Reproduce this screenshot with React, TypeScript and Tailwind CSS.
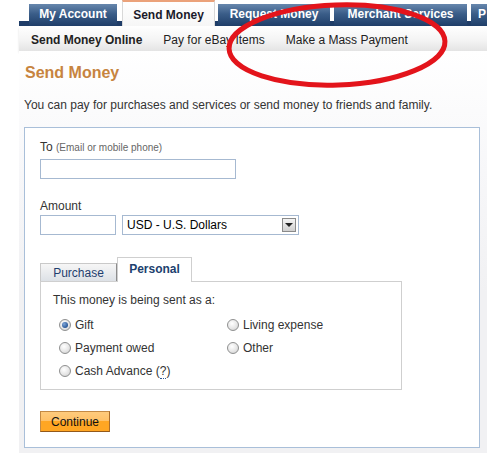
import React from "react"

// Barra superior con pestañas tipo PayPal clásico
const DARK_TAB =
  "h-[22px] flex justify-center pt-[3px] text-white font-bold text-[12px] leading-[14px] whitespace-nowrap bg-[linear-gradient(to_bottom,#6787ad,#3a5d88_45%,#1f3e69)]"

function Radio({ checked = false }: { checked?: boolean }) {
  return (
    <span className="w-[12px] h-[12px] rounded-full border border-[#8f9090] bg-[radial-gradient(circle_at_40%_35%,#ffffff,#e6e6e6_55%,#c9c9c9)] flex items-center justify-center shrink-0">
      {checked && (
        <span className="w-[6px] h-[6px] rounded-full bg-[radial-gradient(circle_at_35%_35%,#7fa6d8,#2a5898_70%)]" />
      )}
    </span>
  )
}

function RadioOption({ label, checked }: { label: React.ReactNode; checked?: boolean }) {
  return (
    <label className="h-[23px] flex items-center gap-[4px] text-[12px] text-[#333]">
      <Radio checked={checked} />
      <span>{label}</span>
    </label>
  )
}

export default function App() {
  return (
    <div className="relative w-[487px] h-[453px] overflow-hidden bg-white font-['Liberation_Sans',Arial,sans-serif]">
      <div className="ml-[19px] h-full flex flex-col">
        {/* Pestañas */}
        <div className="h-[26px] flex items-end bg-[linear-gradient(to_bottom,transparent_21px,#1f3d68_21px)]">
          <div className={`${DARK_TAB} ml-[10px] w-[88px]`}>My Account</div>
          <div className="ml-[5px] w-[93px] h-[26px] flex justify-center pt-[6px] border-t-2 border-[#eba27a] border-x border-x-[#d8d8d8] bg-[linear-gradient(to_bottom,#ffffff,#f6f6f6)] text-[#1a1a2a] font-bold text-[12px] leading-[14px] whitespace-nowrap">
            Send Money
          </div>
          <div className={`${DARK_TAB} ml-[3px] w-[112px]`}>Request Money</div>
          <div className={`${DARK_TAB} ml-[4px] w-[133px]`}>Merchant Services</div>
          <div className={`${DARK_TAB} ml-[4px] flex-1 !justify-start pl-[7px] overflow-hidden`}>P</div>
        </div>

        {/* Sub navegación */}
        <div className="h-[25px] flex items-start pt-[7px] pl-[12px] gap-[21px] text-[12px] leading-[14px] text-[#222] bg-[linear-gradient(to_bottom,#ffffff,#f3f3f3_60%,#e4e4e4)] shadow-[0_2px_2px_rgba(0,0,0,0.12)] whitespace-nowrap">
          <span className="font-bold">Send Money Online</span>
          <span>Pay for eBay Items</span>
          <span>Make a Mass Payment</span>
        </div>

        {/* Contenido */}
        <div className="flex-1 pl-[5px] pr-[7px] pt-[13px] bg-[linear-gradient(to_bottom,#ffffff,#f7f7f9_30%,#f1f1f3_60%)]">
          <h1 className="ml-px text-[16px] leading-[18px] font-bold text-[#c7843f]">Send Money</h1>
          <p className="mt-[16px] text-[12px] leading-[14px] text-[#333] whitespace-nowrap">
            You can pay for purchases and services or send money to friends and family.
          </p>

          <div className="mt-[15px] border border-[#a9bfd9] bg-white pl-[15px] pt-[12px] pb-[14px]">
            <div className="text-[12px] leading-[14px] text-[#333]">
              To <span className="text-[10px] text-[#666]">(Email or mobile phone)</span>
            </div>
            <div className="mt-[4px] w-[196px] h-[20px] border border-[#a6b9d1] bg-white" />

            <div className="mt-[20px] text-[12px] leading-[14px] text-[#333]">Amount</div>
            <div className="mt-[2px] flex gap-[6px]">
              <div className="w-[76px] h-[20px] border border-[#a6b9d1] bg-white" />
              <div className="w-[177px] h-[20px] border border-[#a6b9d1] bg-white flex items-center pl-[4px] pr-[2px]">
                <span className="flex-1 text-[12px] text-black">USD - U.S. Dollars</span>
                <span className="w-[14px] h-[14px] border border-[#8a8a8a] bg-[linear-gradient(to_bottom,#f4f4f4,#cfcfcf)] flex items-center justify-center">
                  <span className="w-0 h-0 border-x-[4px] border-x-transparent border-t-[4px] border-t-[#222]" />
                </span>
              </div>
            </div>

            {/* Pestañas Purchase / Personal */}
            <div className="mt-[22px] flex items-end">
              <div className="w-[77px] h-[18px] border border-[#c9c9c9] border-r-[#8c8c8c] border-b-0 bg-[linear-gradient(to_bottom,#f6f6f6,#dde1e6)] flex items-center justify-center text-[12px] text-[#1f3e6e]">
                Purchase
              </div>
              <div className="relative -mb-px w-[75px] h-[25px] border border-[#cfcfcf] border-b-0 bg-white flex justify-center pt-[4px] text-[12px] leading-[14px] font-bold text-[#203f6e] z-10">
                Personal
              </div>
            </div>
            <div className="w-[362px] h-[109px] border border-[#cfcfcf] pl-[12px] pt-[11px]">
              <div className="text-[12px] leading-[14px] text-[#333]">This money is being sent as a:</div>
              <div className="mt-[6px] ml-[6px] grid grid-cols-[168px_1fr]">
                <RadioOption label="Gift" checked />
                <RadioOption label="Living expense" />
                <RadioOption label="Payment owed" />
                <RadioOption label="Other" />
                <RadioOption
                  label={
                    <>
                      Cash Advance (<span className="border-b border-dotted border-[#2a5898]">?</span>)
                    </>
                  }
                />
              </div>
            </div>

            <button className="mt-[21px] w-[70px] h-[21px] border border-[#c48a45] border-b-[#93591a] border-r-[#a86c2c] bg-[linear-gradient(to_bottom,#ffcb7d,#ffc066_50%,#ffa623_50%,#ffa623)] text-[12px] leading-[14px] text-[#111]">
              Continue
            </button>
          </div>
        </div>
      </div>

      {/* Círculo rojo a mano */}
      <svg className="absolute inset-0 pointer-events-none" width="487" height="453">
        <ellipse
          cx="337"
          cy="45"
          rx="108"
          ry="40"
          transform="rotate(-2 337 45)"
          fill="none"
          stroke="#e3141b"
          strokeWidth="5"
        />
      </svg>
    </div>
  )
}
